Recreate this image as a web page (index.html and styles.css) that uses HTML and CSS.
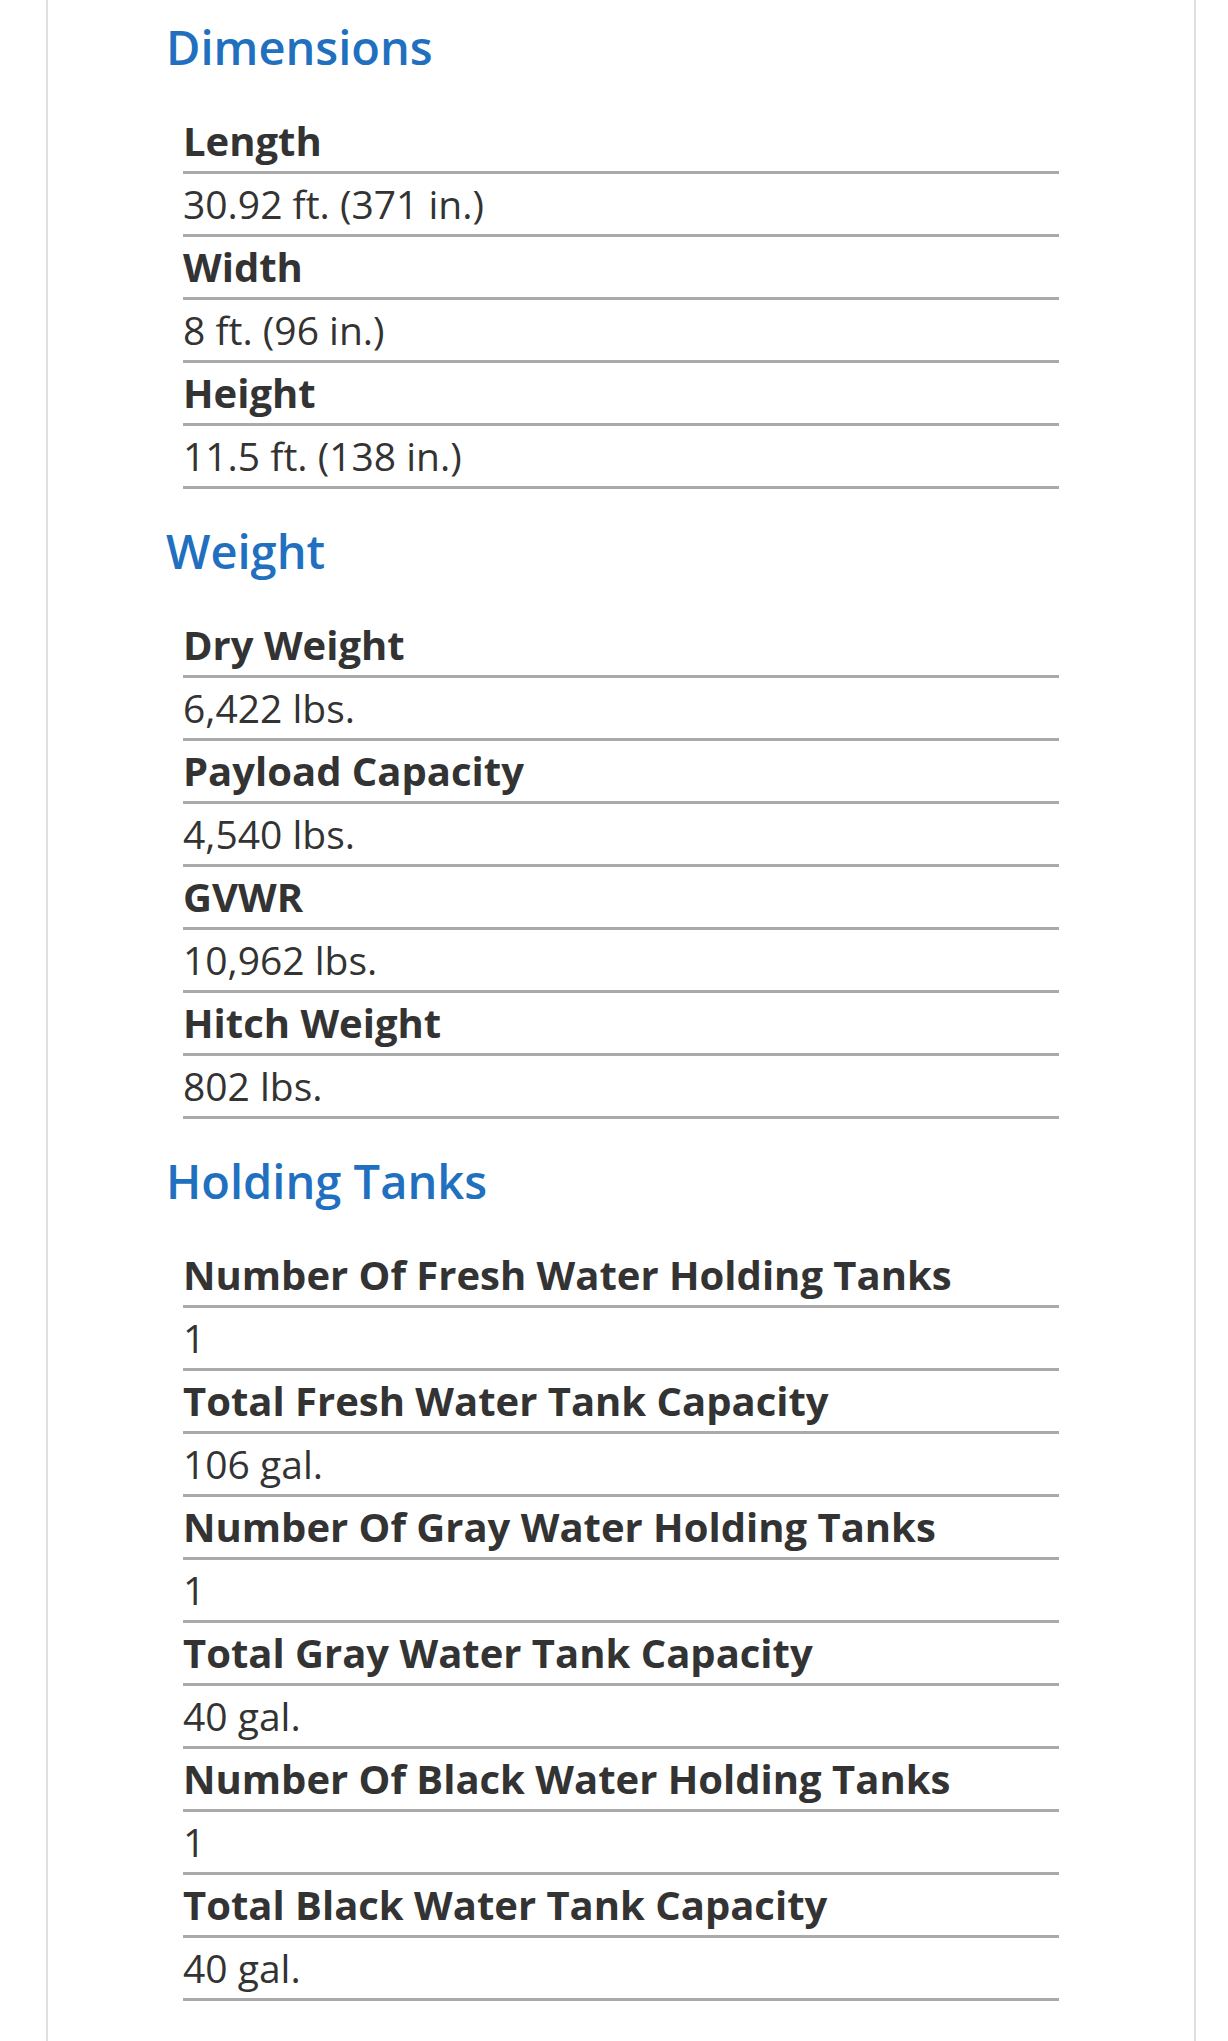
FILE: index.html
```html
<!DOCTYPE html>
<html lang="en">
<head>
    <meta charset="UTF-8">
    <meta name="viewport" content="width=device-width, initial-scale=1.0">
    <title>Specifications</title>
    <link rel="stylesheet" href="styles.css">
</head>
<body>
    <div class="specs">
        <section class="spec-group">
            <h2>Dimensions</h2>
            <dl>
                <dt>Length</dt>
                <dd>30.92 ft. (371 in.)</dd>
                <dt>Width</dt>
                <dd>8 ft. (96 in.)</dd>
                <dt>Height</dt>
                <dd>11.5 ft. (138 in.)</dd>
            </dl>
        </section>

        <section class="spec-group">
            <h2>Weight</h2>
            <dl>
                <dt>Dry Weight</dt>
                <dd>6,422 lbs.</dd>
                <dt>Payload Capacity</dt>
                <dd>4,540 lbs.</dd>
                <dt>GVWR</dt>
                <dd>10,962 lbs.</dd>
                <dt>Hitch Weight</dt>
                <dd>802 lbs.</dd>
            </dl>
        </section>

        <section class="spec-group">
            <h2>Holding Tanks</h2>
            <dl>
                <dt>Number Of Fresh Water Holding Tanks</dt>
                <dd>1</dd>
                <dt>Total Fresh Water Tank Capacity</dt>
                <dd>106 gal.</dd>
                <dt>Number Of Gray Water Holding Tanks</dt>
                <dd>1</dd>
                <dt>Total Gray Water Tank Capacity</dt>
                <dd>40 gal.</dd>
                <dt>Number Of Black Water Holding Tanks</dt>
                <dd>1</dd>
                <dt>Total Black Water Tank Capacity</dt>
                <dd>40 gal.</dd>
            </dl>
        </section>
    </div>
</body>
</html>
```

FILE: styles.css
```css
body {
    margin: 0;
    background-color: #fff;
    font-family: "Open Sans", "Noto Sans", Arial, sans-serif;
    color: #333;
}
.specs {
    margin: 0 32px 0 46px;
    min-height: 2041px;
    border-left: 2px solid #e0e0e0;
    border-right: 2px solid #e0e0e0;
    padding: 17px 0 0 118px;
    box-sizing: border-box;
}
.spec-group {
    margin-bottom: 32px;
}
h2 {
    margin: 0 0 34px 0;
    font-size: 47px;
    line-height: 60px;
    font-weight: 600;
    color: #2170c0;
}
dl {
    margin: 0 0 0 17px;
    width: 876px;
}
dt, dd {
    margin: 0;
    font-size: 40px;
    line-height: 60px;
    border-bottom: 3px solid #aaa;
    white-space: nowrap;
}
dt {
    font-weight: 700;
}
dd {
    font-size: 39px;
    font-weight: 400;
}
```
